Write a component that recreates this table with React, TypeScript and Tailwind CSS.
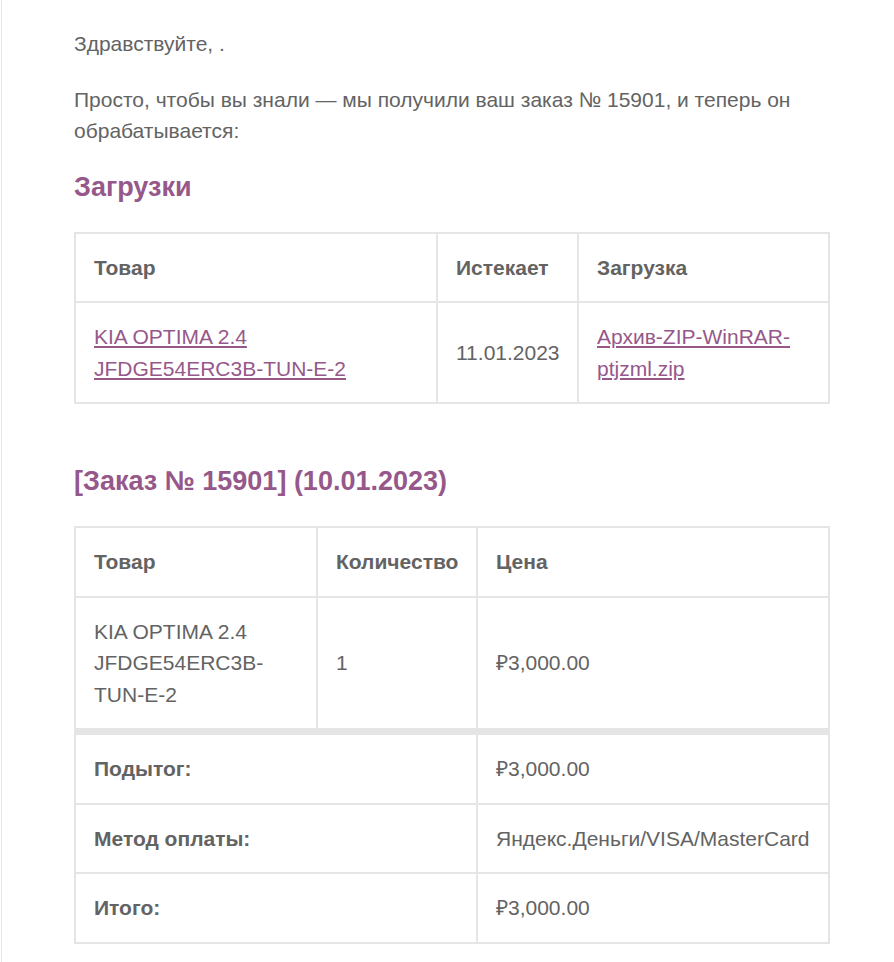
import React from "react";

const cell = "border border-[#e5e5e5] p-[18px] text-left align-middle";
const link = "text-[#96588a] underline";

function DownloadsTable() {
  return (
    <table className="mb-[60px] w-[756px] table-fixed border-separate border-spacing-0 border border-[#e5e5e5]">
      <thead>
        <tr>
          <th className={`${cell} w-[362px] font-bold`}>Товар</th>
          <th className={`${cell} w-[141px] font-bold`}>Истекает</th>
          <th className={`${cell} w-[251px] font-bold`}>Загрузка</th>
        </tr>
      </thead>
      <tbody>
        <tr>
          <td className={cell}>
            <a href="#" className={link}>
              KIA OPTIMA 2.4 JFDGE54ERC3B-TUN-E-2
            </a>
          </td>
          <td className={cell}>11.01.2023</td>
          <td className={cell}>
            <a href="#" className={link}>
              Архив-ZIP-WinRAR-ptjzml.zip
            </a>
          </td>
        </tr>
      </tbody>
    </table>
  );
}

function OrderTable() {
  const foot = [
    { label: "Подытог:", value: "₽3,000.00" },
    { label: "Метод оплаты:", value: "Яндекс.Деньги/VISA/MasterCard" },
    { label: "Итого:", value: "₽3,000.00" },
  ];
  return (
    <table className="w-[756px] table-fixed border-separate border-spacing-0 border border-[#e5e5e5]">
      <thead>
        <tr>
          <th className={`${cell} w-[242px] font-bold`}>Товар</th>
          <th className={`${cell} w-[160px] font-bold`}>Количество</th>
          <th className={`${cell} w-[352px] font-bold`}>Цена</th>
        </tr>
      </thead>
      <tbody>
        <tr>
          <td className={`${cell} break-words`}>KIA OPTIMA 2.4 JFDGE54ERC3B-TUN-E-2</td>
          <td className={cell}>1</td>
          <td className={cell}>₽3,000.00</td>
        </tr>
      </tbody>
      <tfoot>
        {foot.map((row, i) => (
          <tr key={row.label}>
            <th colSpan={2} className={`${cell} font-bold ${i === 0 ? "border-t-[6px]" : ""}`}>
              {row.label}
            </th>
            <td className={`${cell} ${i === 0 ? "border-t-[6px]" : ""}`}>{row.value}</td>
          </tr>
        ))}
      </tfoot>
    </table>
  );
}

export default function App() {
  return (
    <div className="min-h-screen bg-white pl-px font-['Liberation_Sans',Arial,sans-serif] text-[21px] leading-[31.5px] text-[#636363]">
      <div className="min-h-screen border-l border-[#e5e5e5] pl-[72px] pt-[28px] pb-[20px]">
        <p className="mb-[24px]">Здравствуйте, .</p>
        <p className="mb-[23px] w-[756px]">
          Просто, чтобы вы знали — мы получили ваш заказ № 15901, и теперь он обрабатывается:
        </p>

        <h2 className="mb-[27px] text-[27px] font-bold leading-[1.3] text-[#96588a]">Загрузки</h2>
        <DownloadsTable />

        <h2 className="mb-[27px] text-[27px] font-bold leading-[1.3] text-[#96588a]">
          [Заказ № 15901] (10.01.2023)
        </h2>
        <OrderTable />
      </div>
    </div>
  );
}
